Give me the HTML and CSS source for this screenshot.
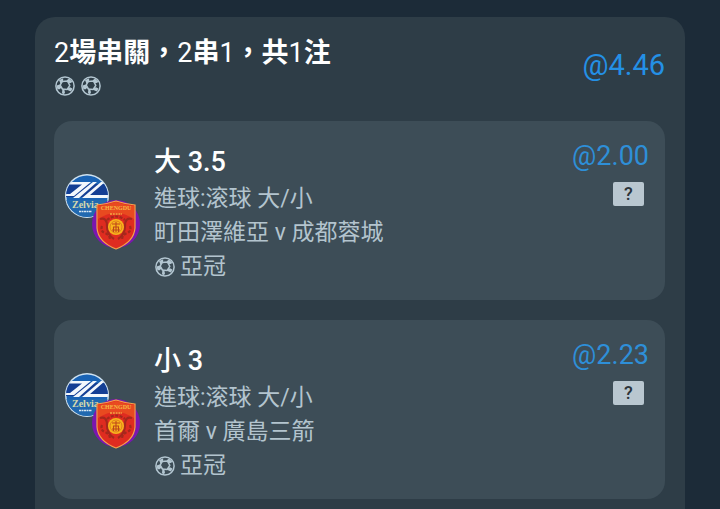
FILE: index.html
```html
<!DOCTYPE html>
<html lang="zh-Hant">
<head>
<meta charset="utf-8">
<meta name="viewport" content="width=device-width, initial-scale=1">
<title>2場串關</title>
<link rel="stylesheet" href="styles.css">
</head>
<body>
<svg class="defs" aria-hidden="true">
  <symbol id="ball" viewBox="0 0 20 20">
    <circle cx="10" cy="10" r="9.1" fill="none" stroke="currentColor" stroke-width="1.5"/>
    <path d="M7 5.600 12.400 5 14.800 9.400 12.200 13.400 7.400 13 5.200 9.200Z" fill="none" stroke="currentColor" stroke-width="1.500" stroke-linejoin="round"/>
    <path d="M4 4 8.200 2.200 8 6 5.400 7.400ZM12 4 14 2.400 17.200 5.400 16.400 6.800 14 7.200 12 5.600ZM1.600 9.400 4.600 8.600 6.400 11.600 4.800 13.200 2.400 13.200ZM13 11.800 15 11.200 17.400 12.400 16 15.400 14 14.800 11.800 13.600ZM7.400 12.600 9.200 13 10 16.400 9 18.200 7 17.200Z" fill="currentColor"/>
  </symbol>
  <symbol id="crests" viewBox="0 0 76 82">
    <clipPath id="round"><circle cx="23" cy="24" r="21"/></clipPath>
    <circle cx="23" cy="24" r="22" fill="#cfe2f1"/>
    <circle cx="23" cy="24" r="20.6" fill="#1a63b4"/>
    <g clip-path="url(#round)">
      <path d="M0 12H46V25H0Z" fill="#143f94"/>
      <path d="M4 10H27L10 24H0V22H6L18 12.500H3Z" fill="#f3f8fc"/>
      <path d="M29 10H33L15 26H9ZM37 10H41L26 23H46V26H18Z" fill="#f3f8fc"/>
      <path d="M0 28H46V46H0Z" fill="#2169b0"/>
    </g>
    <text class="crest-blue" x="8" y="36">Zelvia</text>
    <path d="M15 39.500H28" stroke="#d9e8f2" stroke-width="1.500" stroke-dasharray="2 .5"/>
    <circle cx="52" cy="52" r="24" fill="#7b16b0"/>
    <path d="M33 33Q43 32 52 29Q61 32 71 33V56Q70 70 52 77Q34 70 33 56Z" fill="#df2c20" stroke="#f5a34a" stroke-width="1.200"/>
    <path d="M34 34Q43 33 52 30Q61 33 70 34V47Q61 41 52 41T34 47Z" fill="#e84a20"/>
    <text class="crest-red" x="52" y="38" text-anchor="middle">CHENGDU</text>
    <path d="M46 42H58" stroke="#f3ad42" stroke-width="1.600" stroke-dasharray="2 .8"/>
    <g fill="none" stroke="#a5281c" stroke-width="2.200">
      <path d="M36 47Q43 45 43 54T50 67M68 47Q61 45 61 54T54 67"/>
      <path d="M38 54Q36 59 41 61T46 68M66 54Q68 59 63 61T58 68M43 48Q52 41 61 48" stroke-dasharray="3 1.500"/>
    </g>
    <circle cx="52" cy="55" r="8" fill="#f8b51d"/>
    <circle cx="52" cy="55" r="6" fill="none" stroke="#d9711c" stroke-width=".8"/>
    <path d="M48 52H56M49 55H55M48 58H56M52 50V60M49.500 55V60M54.500 55V60" fill="none" stroke="#bd451b" stroke-width="1.100"/>
  </symbol>
</svg>

<main class="slip">
  <header class="slip-head">
    <div>
      <h1 class="slip-title">2<b>場串關，</b>2<b>串</b>1<b>，共</b>1<b>注</b></h1>
      <div class="balls">
        <svg class="ball"><use href="#ball"/></svg>
        <svg class="ball"><use href="#ball"/></svg>
      </div>
    </div>
    <div class="total">@4.46</div>
  </header>

  <section class="leg">
    <svg class="crests" role="img" aria-label="Zelvia, Chengdu"><use href="#crests"/></svg>
    <div class="info">
      <h2 class="pick">大 3.5</h2>
      <p class="line">進球:滚球 大/小</p>
      <p class="line">町田澤維亞 v 成都蓉城</p>
      <p class="line league"><svg class="ball"><use href="#ball"/></svg>亞冠</p>
    </div>
    <div class="side">
      <div class="odds">@2.00</div>
      <button class="help" type="button">?</button>
    </div>
  </section>

  <section class="leg">
    <svg class="crests" role="img" aria-label="Zelvia, Chengdu"><use href="#crests"/></svg>
    <div class="info">
      <h2 class="pick">小 3</h2>
      <p class="line">進球:滚球 大/小</p>
      <p class="line">首爾 v 廣島三箭</p>
      <p class="line league"><svg class="ball"><use href="#ball"/></svg>亞冠</p>
    </div>
    <div class="side">
      <div class="odds">@2.23</div>
      <button class="help" type="button">?</button>
    </div>
  </section>
</main>
</body>
</html>
```
FILE: styles.css
```css
* { box-sizing: border-box; }

body {
  margin: 0;
  padding: 17px 35px 0;
  background: #1c2b38;
  color: #b3c4ce;
  font-family: Roboto, "Noto Sans CJK TC", sans-serif;
}

h1, h2, p { margin: 0; }

.defs {
  position: absolute;
  width: 0;
  height: 0;
}

.slip {
  display: flex;
  flex-direction: column;
  gap: 20px;
  padding: 18px 20px 10px 19px;
  border-radius: 20px 20px 0 0;
  background: #2e3d47;
}

.slip-head {
  display: flex;
  justify-content: space-between;
  height: 66px;
}

.slip-title {
  color: #fff;
  font-size: 27px;
  font-weight: 400;
  line-height: 36px;
}

.slip-title b { font-weight: 700; }

.balls {
  display: flex;
  gap: 6px;
  padding: 5px 1px;
}

.ball {
  flex: none;
  width: 20px;
  height: 20px;
  color: #b3c6d1;
}

.total {
  padding-top: 12px;
  color: #2490e5;
  font-size: 29px;
  line-height: 36px;
}

.leg {
  display: flex;
  padding: 21px 16px 16px 10px;
  border-radius: 18px;
  background: #3d4d57;
}

.crests {
  flex: none;
  align-self: center;
  width: 76px;
  height: 82px;
}

.crest-blue {
  fill: #d4d9ad;
  font: 700 10px "Liberation Serif", serif;
}

.crest-red {
  fill: #f7b845;
  font: 700 6px "Liberation Serif", serif;
}

.info {
  flex: 1;
  padding-left: 14px;
}

.pick {
  color: #fff;
  font-size: 27px;
  font-weight: 500;
  line-height: 40px;
}

.line {
  font-size: 23px;
  line-height: 34px;
}

.league {
  display: flex;
  align-items: center;
  gap: 5px;
  padding-left: 1px;
}

.side {
  display: flex;
  flex-direction: column;
  align-items: flex-end;
  gap: 12px;
}

.odds {
  color: #2e8fd8;
  font-size: 27px;
  line-height: 28px;
}

.help {
  width: 31px;
  height: 24px;
  margin-right: 5px;
  padding: 0;
  border: 0;
  border-radius: 2px;
  background: #b9c7d0;
  color: #2b343b;
  font: 500 18px/24px Roboto, sans-serif;
}
```
